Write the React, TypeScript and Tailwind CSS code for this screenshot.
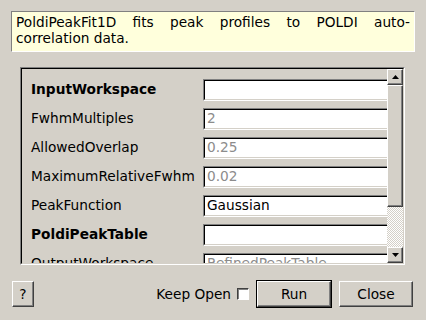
import React from 'react';

const rows: {label: string; value: string; bold?: boolean; grey?: boolean}[] = [
  {label: 'InputWorkspace', value: '', bold: true},
  {label: 'FwhmMultiples', value: '2', grey: true},
  {label: 'AllowedOverlap', value: '0.25', grey: true},
  {label: 'MaximumRelativeFwhm', value: '0.02', grey: true},
  {label: 'PeakFunction', value: 'Gaussian'},
  {label: 'PoldiPeakTable', value: '', bold: true},
  {label: 'OutputWorkspace', value: 'RefinedPeakTable', grey: true}
];

function Arrow({down}: {down?: boolean}) {
  return (
    <svg width="7" height="4" viewBox="0 0 7 4">
      <path d={down ? 'M0 0h7L3.5 4z' : 'M0 4h7L3.5 0z'} fill="#000" />
    </svg>
  );
}

function ScrollButton({down}: {down?: boolean}) {
  return (
    <div className="flex h-[16px] w-[16px] items-center justify-center border border-t-white border-l-white border-b-[#404040] border-r-[#404040] bg-[#d4d0c8] shadow-[inset_-1px_-1px_0_#808080]">
      <Arrow down={down} />
    </div>
  );
}

function Field({value, grey}: {value: string; grey?: boolean}) {
  return (
    <div className="h-[22px] w-[200px] shrink-0 border border-t-[#808080] border-l-[#808080] border-b-white border-r-white">
      <div className={`flex h-full items-center border border-t-black border-l-black border-b-[#d4d0c8] border-r-[#d4d0c8] bg-white pl-[2px] ${grey ? 'text-[#8c8c8c]' : 'text-black'}`}>
        {value}
      </div>
    </div>
  );
}

function Button({children, wide, isDefault}: {children: React.ReactNode; wide?: boolean; isDefault?: boolean}) {
  const inner = (
    <div className={`flex items-center justify-center border border-t-white border-l-white border-b-[#404040] border-r-[#404040] bg-[#d4d0c8] shadow-[inset_-1px_-1px_0_#808080] ${wide ? 'h-[26px] w-[74px]' : 'h-[26px] w-[22px]'}`}>
      {children}
    </div>
  );
  if (isDefault) return <div className="border border-black">{inner}</div>;
  return inner;
}

export default function App() {
  return (
    <div
      className="flex h-[320px] w-[426px] flex-col bg-[#d4d0c8] text-[13.7px] text-black"
      style={{fontFamily: '"DejaVu Sans", sans-serif'}}
    >
      <div className="ml-[11px] mt-[11px] h-[41px] w-[404px] border border-t-[#808080] border-l-[#808080] border-b-white border-r-white bg-[#ffffdc] px-[4px] pt-[2px] leading-[16px] text-justify">
        PoldiPeakFit1D fits peak profiles to POLDI auto-correlation data.
      </div>

      <div className="ml-[20px] mt-[15px] h-[198px] w-[385px] border border-t-[#808080] border-l-[#808080] border-b-white border-r-white">
        <div className="flex h-full border border-t-black border-l-black border-b-[#d4d0c8] border-r-[#d4d0c8]">
          <div className="flex-1 overflow-hidden pt-[6px] pl-[9px]">
            {rows.map((r) => (
              <div key={r.label} className="flex h-[29px] items-center">
                <div className={`w-[172px] shrink-0 whitespace-nowrap ${r.bold ? 'font-bold' : ''}`}>{r.label}</div>
                <Field value={r.value} grey={r.grey} />
              </div>
            ))}
          </div>
          <div className="flex w-[16px] flex-col">
            <ScrollButton />
            <div className="h-[122px] border border-t-white border-l-white border-b-[#404040] border-r-[#404040] bg-[#d4d0c8] shadow-[inset_-1px_-1px_0_#808080]" />
            <div className="flex-1 bg-[repeating-conic-gradient(#ffffff_0%_25%,#d4d0c8_0%_50%)] bg-size-[2px_2px]" />
            <ScrollButton down />
          </div>
        </div>
      </div>

      <div className="mt-[15px] flex items-center pl-[12px] pr-[13px]">
        <Button>?</Button>
        <div className="flex-1" />
        <span>Keep Open</span>
        <div className="ml-[6px] mr-[7px] h-[12px] w-[12px] border border-t-[#404040] border-l-[#404040] border-b-white border-r-white bg-white shadow-[inset_1px_1px_0_#808080]" />
        <Button wide isDefault>Run</Button>
        <div className="ml-[7px]">
          <Button wide>Close</Button>
        </div>
      </div>
    </div>
  );
}
